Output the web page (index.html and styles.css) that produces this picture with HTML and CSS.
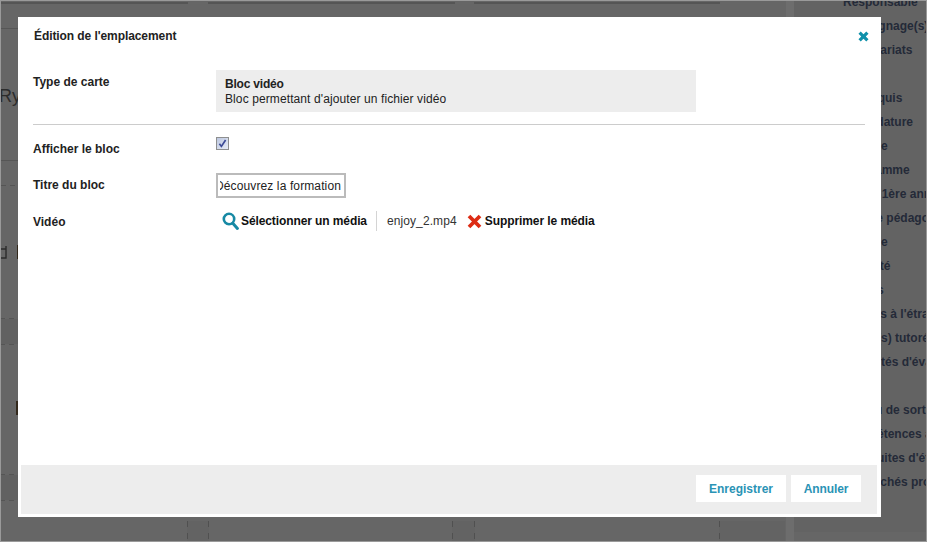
FILE: index.html
```html
<!DOCTYPE html>
<html lang="fr">
<head>
<meta charset="utf-8">
<title>Édition de l'emplacement</title>
<link rel="stylesheet" href="styles.css">
</head>
<body>
<div class="page">
  <div class="main">
    <div class="top-row">
      <span class="top-seg top-seg-a"></span>
      <span class="top-seg top-seg-b"></span>
      <span class="top-seg top-seg-c"></span>
    </div>
    <div class="rail">
      <div class="rule rule-1"></div>
      <div class="rail-title">Rythmes</div>
      <div class="rule rule-2"></div>
      <div class="dash dash-1"></div>
      <div class="rail-icons">
        <svg class="rail-icon" width="8" height="14" viewBox="0 0 8 14"><path d="M0 4H5M5 1V13H0" fill="none" stroke="#2c2c2c" stroke-width="1.4"/></svg>
        <span class="rail-bar"></span>
      </div>
      <div class="band band-1"></div>
      <div class="rail-bar rail-bar-2"></div>
      <div class="band band-2"></div>
    </div>
    <div class="bottom-row">
      <span class="gutter gutter-a"></span>
      <span class="gutter gutter-b"></span>
      <span class="gutter gutter-c"></span>
    </div>
  </div>
  <div class="strip"></div>
  <div class="side">
    <ul class="side-list">
      <li>Responsable</li>
      <li>Témoignage(s)</li>
      <li>Partenariats</li>
      <li class="empty"></li>
      <li>Pré-requis</li>
      <li>Candidature</li>
      <li>Licence</li>
      <li>Programme</li>
      <li>Accès 1ère année</li>
      <li>Équipe pédagogique</li>
      <li>Rentrée</li>
      <li>Sécurité</li>
      <li>Projets</li>
      <li>Séjours à l'étranger</li>
      <li>Projet(s) tutoré(s)</li>
      <li>Modalités d'évaluation</li>
      <li class="empty"></li>
      <li>Niveau de sortie</li>
      <li>Compétences acquises</li>
      <li>Poursuites d'études</li>
      <li>Débouchés professionnels</li>
    </ul>
  </div>
</div>

<div class="modal">
  <div class="modal-head">
    <h1 class="modal-title">Édition de l'emplacement</h1>
    <svg class="close-icon" width="11" height="11" viewBox="0 0 11 11"><path d="M1.6 1.6L9.4 9.4M9.4 1.6L1.6 9.4" fill="none" stroke="#0f90aa" stroke-width="3.2"/></svg>
  </div>
  <div class="modal-body">
    <div class="row">
      <div class="label">Type de carte</div>
      <div class="type-box">
        <strong class="type-name">Bloc vidéo</strong>
        <span class="type-desc">Bloc permettant d'ajouter un fichier vidéo</span>
      </div>
    </div>
    <hr class="divider">
    <div class="row">
      <div class="label">Afficher le bloc</div>
      <span class="check">
        <svg width="9" height="9" viewBox="0 0 9 9"><path d="M1.4 4.8L3.4 7.4L7.6 1" fill="none" stroke="#3c4a96" stroke-width="1.7"/></svg>
      </span>
    </div>
    <div class="row row-title">
      <div class="label">Titre du bloc</div>
      <div class="text-field"><div class="text-clip"><span>Découvrez la formation</span></div></div>
    </div>
    <div class="row row-video">
      <div class="label label-video">Vidéo</div>
      <div class="media">
        <a class="media-link media-select">
          <svg class="search-icon" width="17" height="18" viewBox="0 0 17 18"><circle cx="7" cy="7" r="5.2" fill="none" stroke="#1789a4" stroke-width="2.6"/><path d="M10.8 11.2L15.4 16.4" fill="none" stroke="#1789a4" stroke-width="3" stroke-linecap="round"/></svg>
          Sélectionner un média
        </a>
        <span class="media-file">enjoy_2.mp4</span>
        <a class="media-link media-remove">
          <svg class="remove-icon" width="15" height="15" viewBox="0 0 15 15"><path d="M2 2L13 13M13 2L2 13" fill="none" stroke="#dd2c14" stroke-width="3.8"/></svg>
          Supprimer le média
        </a>
      </div>
    </div>
  </div>
  <div class="modal-foot">
    <button class="btn btn-save" type="button">Enregistrer</button>
    <button class="btn btn-cancel" type="button">Annuler</button>
  </div>
</div>
</body>
</html>
```

FILE: styles.css
```css
* { box-sizing: border-box; }
html, body { margin: 0; padding: 0; height: 100%; overflow: hidden; }
body { font-family: "Liberation Sans", Arial, sans-serif; font-size: 12px; color: #222; background: #666; }

/* dimmed page behind the dialog */
.page { display: flex; width: 927px; height: 542px; overflow: hidden; background: #666; border: 1px solid #9a9a9a; }
.main { display: flex; flex-direction: column; width: 785px; height: 540px; }
.top-row { display: flex; height: 3px; flex: none; }
.top-seg { display: block; height: 2px; margin-top: 1px; background: #555; }
.top-seg-a { width: 187px; }
.top-seg-b { width: 247px; margin-left: 20px; }
.top-seg-c { width: 246px; margin-left: 19px; }
.rail { flex: 1; width: 187px; min-height: 0; }
.rule { height: 1px; background: #565656; }
.rule-1 { margin-top: 24px; }
.rule-2 { margin-top: 54px; }
.rail-title { margin: 57px 0 0 -2px; font-size: 18px; line-height: 20px; color: #2c2c2c; white-space: nowrap; }
.dash { height: 1px; margin-top: 24px; background: repeating-linear-gradient(90deg, #555 0 5px, #666 5px 9px); }
.rail-icons { display: flex; align-items: flex-start; height: 14px; margin-top: 59px; }
.rail-icon { flex: none; }
.rail-bar { display: block; width: 2px; height: 14px; margin-left: 8px; background: #33291c; }
.rail-bar-2 { margin: 56px 0 0 15px; }
.band { height: 27px; background: #616161; border-top: 1px solid transparent; border-bottom: 1px solid transparent; border-image: repeating-linear-gradient(90deg, #555 0 5px, #666 5px 9px) 1; }
.band-1 { margin-top: 59px; }
.band-2 { margin-top: 59px; }
.bottom-row { display: flex; flex: none; height: 20px; }
.gutter { display: block; height: 20px; background-color: #636363; background-repeat: no-repeat; background-size: 1px 100%; background-image: repeating-linear-gradient(180deg, #505050 0 6px, transparent 6px 12px), repeating-linear-gradient(180deg, #505050 0 6px, transparent 6px 12px); background-position: left top, right top; }
.gutter-a { width: 22px; margin-left: 186px; }
.gutter-b { width: 23px; margin-left: 243px; }
.gutter-c { width: 66px; margin-left: 244px; background-image: repeating-linear-gradient(180deg, #505050 0 6px, transparent 6px 12px); background-position: left top; }
.strip { flex: none; width: 8px; height: 540px; background: #6d6d6d; }
.side { flex: 1; height: 531px; background: #636363; overflow: hidden; }
.side-list { list-style: none; margin: -11px 0 0; padding: 0 0 0 49px; font-size: 12px; font-weight: bold; line-height: 24px; color: #242a38; white-space: nowrap; }
.side-list .empty { height: 24px; }

/* dialog */
.modal { position: absolute; left: 18px; top: 17px; width: 863px; height: 500px; display: flex; flex-direction: column; background: #fff; }
.modal-head { display: flex; justify-content: space-between; align-items: flex-start; height: 53px; flex: none; padding: 11px 12px 0 16px; }
.modal-title { margin: 1px 0 0; font-size: 12px; font-weight: bold; line-height: 15px; letter-spacing: -0.08px; color: #222; }
.close-icon { margin-top: 3px; }
.modal-body { flex: 1; padding: 0 16px 0 15px; }
.row { display: grid; grid-template-columns: 183px 1fr; align-items: start; }
.label { padding-top: 5px; font-weight: bold; line-height: 14px; color: #222; }
.type-box { display: flex; flex-direction: column; width: 480px; height: 42px; padding: 7px 9px 0; background: #ededed; line-height: 15px; color: #222; }
.type-name { font-weight: bold; letter-spacing: -0.2px; }
.type-desc { letter-spacing: 0.1px; }
.divider { height: 1px; margin: 12px 0 12px; border: 0; background: #ccc; }
.check { display: flex; align-items: center; justify-content: center; width: 13px; height: 13px; border: 1px solid #8e8f8f; background: linear-gradient(135deg, #bcc7e0, #e8ecf6); }
.row-title { margin-top: 17px; }
.text-field { width: 130px; height: 25px; padding: 0 3px 0 2px; border: 2px solid #bbb; background: #fff; }
.text-clip { display: flex; justify-content: flex-end; height: 21px; overflow: hidden; line-height: 23px; font-size: 12px; letter-spacing: 0.12px; white-space: nowrap; color: #222; }
.text-clip span { flex: none; }
.row-video { align-items: center; margin-top: 12px; }
.label-video { padding-top: 2px; }
.media { display: flex; align-items: center; height: 22px; padding-left: 6px; }
.media-link { display: flex; align-items: center; font-weight: bold; color: #111; white-space: nowrap; }
.media-select { letter-spacing: -0.1px; }
.search-icon { margin-right: 2px; }
.media-file { height: 20px; margin-left: 9px; padding-left: 10px; border-left: 1px solid #d4d4d4; line-height: 20px; letter-spacing: 0.1px; color: #333; }
.media-remove { margin-left: 10px; letter-spacing: -0.08px; }
.remove-icon { margin-right: 3px; }
.modal-foot { display: flex; justify-content: flex-end; align-items: flex-start; gap: 5px; flex: none; height: 49px; margin: 0 4px 3px 3px; padding: 10px 16px 0 0; background: #ededed; }
.btn { height: 27px; padding: 0; border: 0; background: #fff; font: bold 12px "Liberation Sans", Arial, sans-serif; color: #2a93b5; }
.btn-save { width: 90px; }
.btn-cancel { width: 70px; letter-spacing: -0.1px; }
```
